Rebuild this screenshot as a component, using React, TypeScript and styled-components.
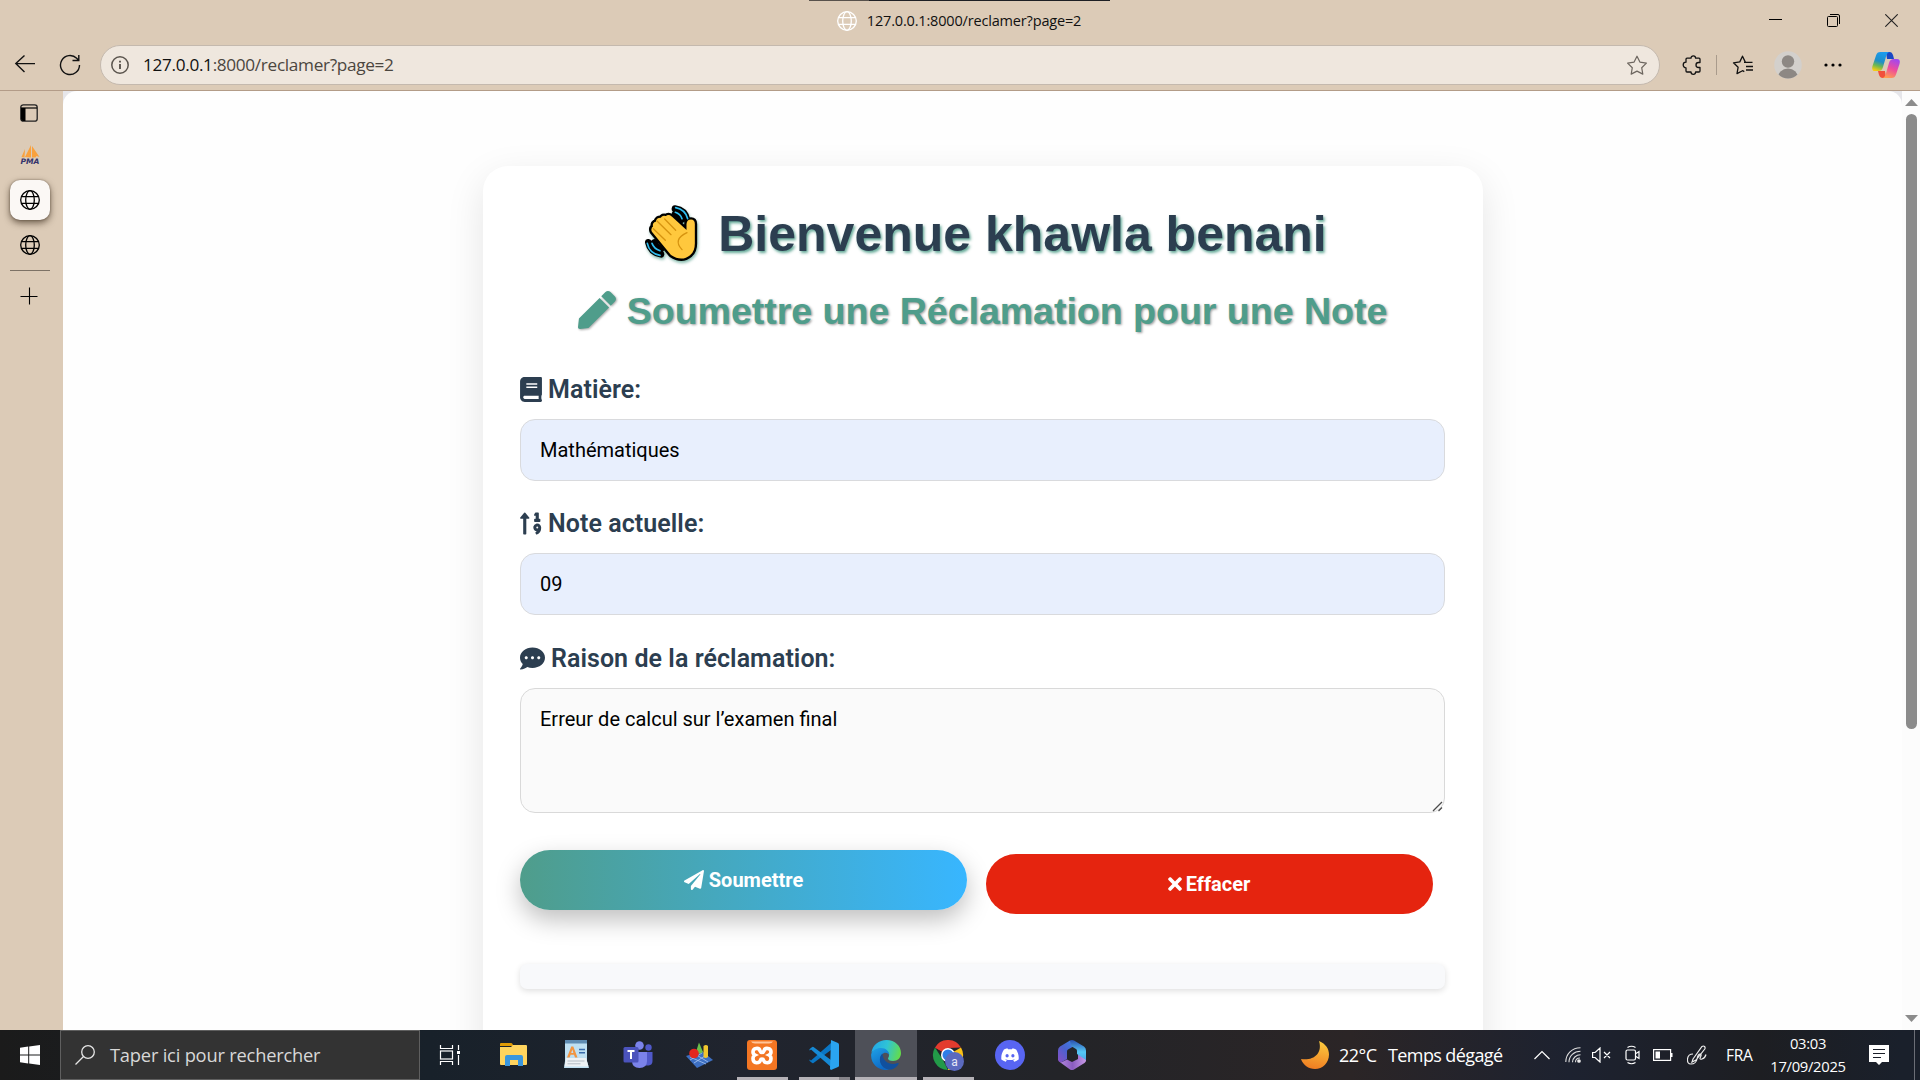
import React from 'react';
import styled, { createGlobalStyle } from 'styled-components';
import { FaPen, FaBook, FaSortNumericUp, FaCommentDots, FaPaperPlane, FaTimes, FaDiscord } from 'react-icons/fa';

const UI = `"Segoe UI", "Open Sans", "Noto Sans", sans-serif`;

const GlobalStyle = createGlobalStyle`
  * { box-sizing: border-box; }
  body { margin: 0; overflow: hidden; background: #dccbb7; }
  svg { display: block; flex: none; }
`;

const Desktop = styled.div`
  width: 1920px;
  height: 1080px;
  display: flex;
  flex-direction: column;
  overflow: hidden;
  background: #dccbb7;
  font-family: ${UI};
  color: #111;
`;

/* ---------- browser chrome ---------- */

const TopLine = styled.div`
  height: 1px;
  width: 301px;
  margin-left: 809px;
  background: linear-gradient(90deg, #58524c 60px, #1d1f24 60px);
`;

const TitleBar = styled.div`
  height: 39px;
  display: grid;
  grid-template-columns: 1fr auto 1fr;
  align-items: center;
`;

const TabTitle = styled.div`
  grid-column: 2;
  display: flex;
  align-items: center;
  gap: 10px;
  height: 39px;
  padding-right: 2px;
  font-size: 14.5px;
  letter-spacing: -0.17px;
  white-space: nowrap;
`;

const WindowButtons = styled.div`
  display: flex;
  justify-content: flex-end;
  gap: 45px;
  padding-right: 22px;
`;

const Toolbar = styled.div`
  height: 51px;
  display: flex;
  align-items: center;
  padding: 0 19px 1px 14px;
  border-bottom: 1px solid #b39c88;
`;

const NavButtons = styled.div`
  display: flex;
  gap: 23px;
  width: 86px;
`;

const AddressBar = styled.div`
  width: 1560px;
  height: 40px;
  display: flex;
  align-items: center;
  padding: 0 11px 0 10px;
  border: 1px solid #c4b9ae;
  border-radius: 20px;
  background: #efe7de;
`;

const Url = styled.div`
  flex: 1;
  padding-left: 14px;
  font-size: 17.2px;
  letter-spacing: -0.32px;
  color: #4b4640;
  b { font-weight: 400; color: #111; }
`;

const Tools = styled.div`
  flex: 1;
  display: flex;
  align-items: center;
  gap: 20px;
  padding-left: 22px;
`;

const ToolDivider = styled.div`
  width: 1px;
  height: 20px;
  margin: 0 -5px 0 -6px;
  background: #a99b8c;
`;

const MoreDots = styled.div`
  padding: 0 10px 0 2px;
`;

const Middle = styled.div`
  height: 939px;
  display: flex;
`;

const Rail = styled.div`
  width: 63px;
  display: flex;
  flex-direction: column;
  align-items: flex-start;
  padding: 13px 0 0 10px;
`;

const RailItem = styled.div<{ $h: number; $w?: number; $top?: number; $active?: boolean }>`
  width: ${p => p.$w ?? 40}px;
  height: ${p => p.$h}px;
  padding-top: ${p => p.$top ?? 0}px;
  display: grid;
  place-items: center;
  border-radius: 10px;
  background: ${p => (p.$active ? '#fbf8f5' : 'transparent')};
  box-shadow: ${p => (p.$active ? '0 3px 7px rgba(50,35,20,.65), 0 0 2px rgba(50,35,20,.5)' : 'none')};
`;

const RailLine = styled.div`
  width: 40px;
  height: 1px;
  margin: 0 0 16px;
  background: #7d7266;
`;

const PageFrame = styled.div`
  width: 1839px;
  background: #e6e6ea;
`;

const Page = styled.div`
  height: 939px;
  padding-top: 75px;
  overflow: hidden;
  border-radius: 14px 14px 0 0;
  background: #fefefe;
`;

const ScrollTrack = styled.div`
  width: 18px;
  display: flex;
  flex-direction: column;
  align-items: center;
  padding: 8px 0 8px 1px;
  background: #fcfcfc;
`;

const ScrollThumb = styled.div`
  width: 11px;
  height: 615px;
  margin: 8px 0 auto;
  border-radius: 6px;
  background: #8b8b8b;
`;

/* ---------- form ---------- */

const Card = styled.div`
  width: 1000px;
  height: 1100px;
  margin: 0 auto;
  padding: 37.5px;
  border-radius: 25px;
  background: #fff;
  box-shadow: 0 12px 38px rgba(0, 0, 0, 0.1);
  font-family: Roboto, sans-serif;
`;

const Welcome = styled.h1`
  display: flex;
  justify-content: center;
  align-items: center;
  margin: 0 0 25px;
  padding-left: 6px;
  height: 60px;
  font: bold 50px/60px "Liberation Sans", Arial, sans-serif;
  color: #2c3e50;
  white-space: pre;
  text-shadow: 1.5px 2px 3px rgba(82, 160, 140, 0.9);
  svg { margin-right: 16px; filter: drop-shadow(1px 2px 1.5px rgba(82, 160, 140, 0.7)); }
`;

const Subtitle = styled.h2`
  display: flex;
  justify-content: center;
  gap: 11px;
  margin: 0 0 41px;
  height: 45px;
  font: bold 37.5px/45px "Liberation Sans", Arial, sans-serif;
  color: #4f9d8b;
  text-shadow: 1.3px 1.3px 2.5px rgba(0, 0, 0, 0.4);
  svg { margin-top: 2px; filter: drop-shadow(1.3px 1.3px 1.2px rgba(0, 0, 0, 0.35)); }
`;

const Field = styled.div`
  display: flex;
  flex-direction: column;
  margin-bottom: 28.5px;
`;

const Label = styled.label`
  display: flex;
  gap: 6px;
  height: 44px;
  font-size: 25px;
  line-height: 30px;
  font-weight: 600;
  letter-spacing: 0.06px;
  color: #2c3e50;
  svg { margin-top: 2px; }
`;

const Input = styled.input`
  height: 62px;
  padding: 0 19px;
  border: 1px solid #d9dadd;
  border-radius: 15px;
  background: #e8effd;
  font: 20px Roboto, sans-serif;
  color: #000;
  outline: 0;
`;

const AreaWrap = styled.div`
  display: flex;
  position: relative;
`;

const TextArea = styled.textarea`
  flex: 1;
  height: 125px;
  padding: 18.75px 19px;
  border: 1px solid #d9d9d9;
  border-radius: 15px;
  background: #fafafa;
  font: 20px Roboto, sans-serif;
  color: #000;
  outline: 0;
  resize: none;
`;

const ResizeGrip = styled.svg`
  position: absolute;
  right: 2px;
  bottom: 1px;
`;

const Actions = styled.div`
  display: flex;
  gap: 19px;
  margin: 41px 0 50px;
`;

const Action = styled.button<{ $primary?: boolean }>`
  width: 447px;
  height: 60px;
  display: flex;
  align-items: center;
  justify-content: center;
  gap: ${p => (p.$primary ? 5 : 4)}px;
  padding: 0 ${p => (p.$primary ? 0 : 1)}px 0 0;
  border: 0;
  border-radius: 30px;
  color: #fff;
  font: bold 20px Roboto, sans-serif;
  background: ${p => (p.$primary ? 'linear-gradient(90deg, #4f9d8b, #38b6ff)' : '#e5240f')};
  box-shadow: ${p => (p.$primary ? '0 10px 25px rgba(0,0,0,.25)' : 'none')};
  transform: translateY(${p => (p.$primary ? -4 : 0)}px);
`;

const ResultBar = styled.div`
  height: 25px;
  border-radius: 7px;
  background: #f8f9fb;
  box-shadow: 0 2px 6px rgba(0, 0, 0, 0.13);
`;

/* ---------- taskbar ---------- */

const Taskbar = styled.div`
  height: 50px;
  display: flex;
  color: #fff;
  background: linear-gradient(90deg, #1b1b1b 0, #18212a 430px, #20242e 750px, #232428 1060px, #2b2526 1350px, #1d2230 1570px, #1d1e22 1760px, #1a202b 1900px);
`;

const StartButton = styled.div`
  width: 60px;
  display: grid;
  place-items: center;
`;

const Search = styled.div`
  width: 360px;
  display: flex;
  align-items: center;
  gap: 15px;
  padding: 0 0 1px 14px;
  border: 1px solid #5f5f5f;
  background: #333;
  color: #d8d8d8;
  font-size: 18.3px;
  letter-spacing: -0.2px;
`;

const Apps = styled.div`
  display: flex;
`;

const TaskView = styled.div`
  width: 63px;
  padding: 10px 0 0 15px;
`;

const AppSlot = styled.div<{ $open?: boolean; $active?: boolean; $stacked?: boolean }>`
  width: 62px;
  height: 50px;
  display: flex;
  flex-direction: column;
  align-items: center;
  justify-content: space-between;
  padding-top: 10px;
  background: ${p => (p.$active ? '#4e5058' : 'transparent')};
  &::after {
    content: '';
    width: ${p => (p.$active ? 62 : 51)}px;
    height: 3px;
    background: ${p =>
      p.$stacked
        ? 'linear-gradient(90deg, #b5b2b7 40px, #86848a 40px)'
        : p.$open || p.$active
          ? '#b5b2b7'
          : 'transparent'};
  }
`;

const Tray = styled.div`
  flex: 1;
  display: flex;
  align-items: center;
  justify-content: flex-end;
`;

const TrayText = styled.div<{ $w: number; $ls?: number; $size?: number }>`
  width: ${p => p.$w}px;
  font-size: ${p => p.$size ?? 18}px;
  letter-spacing: ${p => p.$ls ?? 0}px;
  white-space: pre;
`;

const TrayIcon = styled.div<{ $w: number }>`
  width: ${p => p.$w}px;
`;

const Clock = styled.div`
  width: 96px;
  margin-right: 13px;
  display: flex;
  flex-direction: column;
  align-items: center;
  font-size: 14.8px;
  line-height: 23px;
  letter-spacing: -0.32px;
`;

const PeekEdge = styled.div`
  width: 1px;
  height: 50px;
  margin: 0 5px 0 25px;
  background: #6b6e76;
`;

/* ---------- drawings ---------- */

const Globe = ({ color = '#000', w = 1.3 }: { color?: string; w?: number }) => (
  <svg width="20" height="20" viewBox="0 0 20 20" fill="none" stroke={color} strokeWidth={w}>
    <circle cx="10" cy="10" r="9.3" />
    <ellipse cx="10" cy="10" rx="4.3" ry="9.3" />
    <path d="M1.4 6.7h17.2M1.4 13.3h17.2" />
  </svg>
);

const palm =
  'M576 313q30 20 54 0q13-12 12-36v-54q0-10-8-10q-9 0-10 10v26l-50-46q-8-6-14 0q-12-4-14 5q-14-2-14 10q-12 2-8 14q-8 4-4 13z';

const WavingHand = () => (
  <svg width="58" height="60" viewBox="493 163 174 180" strokeLinecap="round" strokeLinejoin="round" fill="none">
    <path d="M586 177q30 4 36 34M586 193q14 4 18 18M506 278q6 30 38 36M524 278q4 14 20 20" stroke="#000" strokeWidth="20" />
    <path d={palm} fill="#000" stroke="#000" strokeWidth="21" />
    <path d="M588 174q29 6 36 33M587 188q15 5 20 19M503 281q6 30 38 36M517 281q6 16 24 22" stroke="#2fbdf0" strokeWidth="5" />
    <path d={palm} fill="#ffc83d" stroke="#ffc83d" strokeWidth="7" />
    <path d="M521 237l36 35M532 214l42 41M555 208l33 34M622 249q-44 20-15 51" stroke="#d6930f" strokeWidth="4" />
  </svg>
);

const Copilot = () => (
  <svg width="28" height="28" viewBox="0 0 28 28">
    <defs>
      <linearGradient id="cpA" x1="0.6" y1="0" x2="0.3" y2="1"><stop stopColor="#1b9cf0" /><stop offset=".5" stopColor="#1f8fc7" /><stop offset=".75" stopColor="#6fb84e" /><stop offset="1" stopColor="#f5cb12" /></linearGradient>
      <linearGradient id="cpB" x1="0.7" y1="0" x2="0.3" y2="1"><stop stopColor="#a247ee" /><stop offset=".5" stopColor="#ee4c9c" /><stop offset="1" stopColor="#ffa050" /></linearGradient>
    </defs>
    <path d="M14 1h4q2 0 3 3l1 4h-7z" fill="#1947c4" />
    <path d="M14 27h-4q-2 0-3-3l-1-4h7z" fill="#f1503c" />
    <path d="M8.500 1H18c-3 0-3.500 3-4.500 6.500L11 16c-1 3-2 4-5 4H3c-3 0-3.200-2.500-2.500-5L4 4.500C4.800 2 6 1 8.500 1z" fill="url(#cpA)" />
    <path d="M19.500 27H10c3 0 3.500-3 4.500-6.500L17 12c1-3 2-4 5-4h3c3 0 3.200 2.500 2.500 5L24 23.500c-.8 2.500-2 3.500-4.500 3.500z" fill="url(#cpB)" />
  </svg>
);

const Moon = () => (
  <svg width="28" height="28" viewBox="0 0 28 28">
    <defs><linearGradient id="moon" x1=".6" y1="0" x2=".4" y2="1"><stop stopColor="#fbc93d" /><stop offset="1" stopColor="#f07c22" /></linearGradient></defs>
    <path d="M18 0C25 3 28 8 28 13.500C28 22 21.500 28 14 28C7.500 28 2 24 0 18C12 20 22 13 18 0z" fill="url(#moon)" />
  </svg>
);

const appDrawings: { name: string; art: React.ReactNode; open?: boolean; active?: boolean; stacked?: boolean }[] = [
  {
    name: 'explorer',
    art: (
      <svg width="30" height="30" viewBox="0 0 30 30">
        <path d="M1 4q0-1 1-1h10q1 0 1.500 1l1 2H1z" fill="#e09b05" />
        <path d="M1 7h11l2-2h13q1 0 1 1v18q0 1-1 1H2q-1 0-1-1z" fill="#ffd45e" />
        <path d="M6 26V17q0-2 2-2h14q2 0 2 2v9h-5v-6h-8v6z" fill="#3a96dd" />
      </svg>
    ),
  },
  {
    name: 'wordpad',
    art: (
      <svg width="30" height="30" viewBox="0 0 30 30">
        <path d="M4 1h22v20l2 7H3l1-7z" fill="#bfe0f2" />
        <path d="M4 0h22v3.500H4z" fill="#5f8cb2" />
        <path d="M5 18h20l2.500 8.500H3.500z" fill="#eef2f5" />
        <path d="M6 17.500L10.300 6.500h2l4.200 11h-2.500l-1-2.700H9.600l-1 2.700zM10.200 13h2.200L11.300 9.500z" fill="#f29440" />
        <path d="M18 9.500h6M18 12.800h6" stroke="#3a6cab" strokeWidth="1.600" />
        <path d="M6.500 21h17M6.500 23.800h13" stroke="#b4bdc5" strokeWidth="1" />
      </svg>
    ),
  },
  {
    name: 'teams',
    art: (
      <svg width="30" height="30" viewBox="0 0 30 30">
        <circle cx="25.500" cy="7.500" r="3.200" fill="#5059c9" />
        <path d="M20 12h9.500v9q0 4-4 4.500H20z" fill="#5059c9" />
        <circle cx="16.500" cy="5.500" r="4.300" fill="#7b83eb" />
        <path d="M9 12h15v9q0 7-7.500 7T9 21z" fill="#7b83eb" />
        <rect x="0.500" y="7" width="15" height="15.500" rx="1.500" fill="#4b53bc" />
        <path d="M4.500 11h7M8 11v8" stroke="#fff" strokeWidth="2" />
      </svg>
    ),
  },
  {
    name: 'graph',
    art: (
      <svg width="30" height="30" viewBox="0 0 30 30">
        <path d="M1 16l16-5 11 9-16 8z" fill="#3d6fc2" />
        <path d="M5 17l16 7M10 14l13 8M9 23l14-9M5 20l12-7" stroke="#a8c5f0" strokeWidth=".8" />
        <path d="M14 2.500l4 9.500q-4 3-7 0z" fill="#6cc04a" />
        <circle cx="9" cy="13.500" r="4.800" fill="#e3261f" />
        <path d="M18.500 6q2.500-2 4.500 0v11q-2.500 2-4.500 0z" fill="#f2c62e" />
      </svg>
    ),
  },
  {
    name: 'xampp',
    open: true,
    art: (
      <svg width="30" height="30" viewBox="0 0 30 30">
        <rect width="30" height="30" rx="3" fill="#f37623" />
        <path d="M4 1.500h22q-1 2-4 2H8q-3 0-4-2z" fill="#ffc59a" />
        <path d="M9 8.500q3.500-.5 4 2.500q.5 1.500 2 1.500t2-1.500q.5-3 4-2.500q3 .5 3 3.500q0 2-2 3q2 1 2 3.500q0 4-3.500 4.300q-3.500 0-4-2.800q-.2-1-1.500-1t-1.500 1q-.5 2.800-4 2.800q-3.500-.3-3.500-4.300q0-2.500 2-3.500q-2-1-2-3q0-3 3-3.500z" fill="none" stroke="#fff" strokeWidth="3.600" />
      </svg>
    ),
  },
  {
    name: 'vscode',
    open: true,
    stacked: true,
    art: (
      <svg width="30" height="30" viewBox="0 0 30 30">
        <path d="M2 20.500L22 3v7L4.500 23q-1 .5-1.600-.2L.7 21q-.6-.6 0-1.400z" fill="#0a76c4" />
        <path d="M2 9.500L22 27v-7L4.500 7q-1-.5-1.600.2L.7 9q-.6.6 0 1.400z" fill="#1689d4" />
        <path d="M22 0l7 3q1 .5 1 1.500v21q0 1-1 1.500l-7 3-1-1z" fill="#2aa4f0" />
      </svg>
    ),
  },
  {
    name: 'edge',
    active: true,
    art: (
      <svg width="30" height="30" viewBox="0 0 30 30">
        <defs>
          <linearGradient id="edA" x1="0" y1=".3" x2="1" y2=".5"><stop stopColor="#22a6e8" /><stop offset=".5" stopColor="#2fc3d6" /><stop offset="1" stopColor="#63dc4c" /></linearGradient>
          <linearGradient id="edB" x1="0" y1="0" x2=".5" y2="1"><stop stopColor="#1fa2e6" /><stop offset="1" stopColor="#0d68c4" /></linearGradient>
        </defs>
        <path d="M.3 13C1.500 5 8 0 15.500 0C24 0 30 6 30 13c0 5-3.500 8-8 8c-3.500 0-5-1.500-5-2.500c0-.8 1-1.200 1-3.500c0-3-3-5.500-7-5.500C6 9.500 1.500 11 .3 13z" fill="url(#edA)" />
        <path d="M.2 14C1.500 10.500 5 8 10 8c5 0 8.300 3.500 8.300 7c0 0-2.300-3-5.300-2c-3 1-4 4-3.500 7.500C10.300 26 15 29 19 29.500C8 32-.8 24 .2 14z" fill="url(#edB)" />
        <path d="M11.500 13.500c-5 4-3 14.500 6 16c4 .5 8-2 10-5.500c.4-.8-.2-1.300-1-.9C20 26 11.500 22 11.500 13.500z" fill="#11509e" />
      </svg>
    ),
  },
  {
    name: 'chrome',
    open: true,
    art: (
      <svg width="32" height="32" viewBox="-1 0 32 32">
        <path d="M15 15L2 7.500A15 15 0 0 1 28 7.500L15 8z" fill="#e33b2e" />
        <path d="M15 15L28 7.500A15 15 0 0 1 15 30z" fill="#fbc116" />
        <path d="M2 7.500L10 20l5 10A15 15 0 0 1 2 7.500z" fill="#229a48" />
        <path d="M2 7.500h13V15z" fill="#e33b2e" />
        <circle cx="15" cy="15" r="7" fill="#fff" />
        <circle cx="15" cy="15" r="5.500" fill="#2f7de8" />
        <circle cx="21.500" cy="21.500" r="9.500" fill="#5b6abf" />
        <text x="21.500" y="25.500" textAnchor="middle" fontSize="12" fontFamily="Roboto, sans-serif" fill="#e6e8f7">a</text>
      </svg>
    ),
  },
  {
    name: 'discord',
    art: (
      <svg width="30" height="30" viewBox="0 0 30 30">
        <circle cx="15" cy="15" r="15" fill="#5865f2" />
        <FaDiscord x={5.5} y={5.5} size={19} color="#fff" />
      </svg>
    ),
  },
  {
    name: 'm365',
    art: (
      <svg width="30" height="30" viewBox="0 0 30 30">
        <defs>
          <linearGradient id="mA" x1="0" y1="1" x2="1" y2="0"><stop stopColor="#8a4fc4" /><stop offset=".5" stopColor="#4a62cf" /><stop offset="1" stopColor="#3a86e8" /></linearGradient>
          <linearGradient id="mB" x1="0" y1="0" x2="0" y2="1"><stop stopColor="#2a4fb0" /><stop offset=".6" stopColor="#55c8f5" /><stop offset="1" stopColor="#4aa8e8" /></linearGradient>
          <linearGradient id="mC" x1="0" y1="0" x2="1" y2="0"><stop stopColor="#b58ae0" /><stop offset=".5" stopColor="#8a5cc0" /><stop offset="1" stopColor="#c79ae6" /></linearGradient>
        </defs>
        <path d="M2 21.500q2 1.500 4 0l4-2 5 2.500 6-3V13l7.500 5.500q1.500 2.500-1 4.500L17 29.500q-2 1-4 0z" fill="url(#mC)" />
        <path d="M13 .6L3 6.500Q1 8 1 10.500V20q1 3 4 2l5-3v-7.500q0-1.500 1-2l8-4.500z" fill="url(#mA)" />
        <path d="M13 .6q2-1 4 0l10 6q2 1.500 2 4V20l-9-6v-3q0-1.500-1-2l-5-3z" fill="url(#mB)" />
      </svg>
    ),
  },
];

const App = () => (
  <Desktop>
    <GlobalStyle />
    <TopLine />
    <TitleBar>
      <TabTitle><Globe color="#fff" /><span>127.0.0.1:8000/reclamer?page=2</span></TabTitle>
      <WindowButtons>
        <svg width="13" height="13" viewBox="0 0 13 13"><path d="M0 5.500h13" stroke="#000" /></svg>
        <svg width="13" height="13" viewBox="0 0 13 13" fill="none" stroke="#000"><rect x=".5" y="2.500" width="10" height="10" rx="1" /><path d="M3 .5h8q1.500 0 1.500 1.500v8" /></svg>
        <svg width="13" height="13" viewBox="0 0 13 13"><path d="M.3.3l12.400 12.400M12.700.3L.3 12.700" stroke="#222" strokeWidth="1.100" /></svg>
      </WindowButtons>
    </TitleBar>
    <Toolbar>
      <NavButtons>
        <svg width="22" height="20" viewBox="0 0 22 20" fill="none" stroke="#111" strokeWidth="1.400"><path d="M10.500 1.500L1.800 9.600l8.700 8.400M2 9.600h19" /></svg>
        <svg width="22" height="22" viewBox="0 0 22 22" fill="none" stroke="#111" strokeWidth="1.400"><path d="M20.500 11a9.500 9.500 0 1 1-2.800-6.700l1.800 1.900M19.800 1v5.500H13.500" /></svg>
      </NavButtons>
      <AddressBar>
        <svg width="18" height="18" viewBox="0 0 18 18" fill="none" stroke="#5b554e" strokeWidth="1.500"><circle cx="9" cy="9" r="8.200" /><path d="M9 8v5M9 4.800v1.700" strokeWidth="1.900" /></svg>
        <Url><b>127.0.0.1</b>:8000/reclamer?page=2</Url>
        <svg width="22" height="20" viewBox="0 0 22 20" fill="none" stroke="#6d665f" strokeWidth="1.200" strokeLinejoin="round"><path d="M11 1.200l2.900 5.900 6.500 1-4.700 4.600 1.100 6.400L11 16.100l-5.800 3 1.100-6.400L1.600 8.100l6.500-1z" /></svg>
      </AddressBar>
      <Tools>
        <svg width="20" height="20" viewBox="0 0 20 20" fill="none" stroke="#111" strokeWidth="1.300" strokeLinejoin="round"><path d="M5 3.200h4a2.300 2.300 0 0 1 4.600 0H17q1 0 1 1V7.500h-1.500a2.500 2.500 0 0 0 0 5H18V16q0 1-1 1h-3.400a2.300 2.300 0 0 1-4.600 0H5q-1 0-1-1v-3.200a2.600 2.600 0 0 1 0-5.600V4.200q0-1 1-1z" /></svg>
        <ToolDivider />
        <svg width="22" height="20" viewBox="0 0 22 20" fill="none" stroke="#111" strokeWidth="1.300" strokeLinejoin="round"><path d="M12 7.300h8.500M14 11.500h7M14 15h7M14.500 7.300l-1.200-.2L10.500 1.200 7.800 6.900l-6.300.9 4.600 4.500L5 18.600l5.500-2.900 1.800.9" /></svg>
        <svg width="28" height="28" viewBox="0 0 28 28"><defs><clipPath id="av"><circle cx="14" cy="14" r="13.500" /></clipPath></defs><circle cx="14" cy="14" r="13.800" fill="#d3d0cc" /><g clipPath="url(#av)" fill="#8d8884"><circle cx="14" cy="10.500" r="6.200" /><circle cx="14" cy="28" r="10.500" /></g></svg>
        <MoreDots><svg width="18" height="4" viewBox="0 0 18 4"><circle cx="2" cy="2" r="1.600" /><circle cx="9" cy="2" r="1.600" /><circle cx="16" cy="2" r="1.600" /></svg></MoreDots>
        <Copilot />
      </Tools>
    </Toolbar>

    <Middle>
      <Rail>
        <RailItem $h={18} $w={38}>
          <svg width="18" height="18" viewBox="0 0 18 18"><rect x=".8" y=".8" width="16.400" height="16.400" rx="2.500" fill="none" stroke="#222" strokeWidth="1.300" /><path d="M1 4h16" stroke="#000" strokeWidth="1.200" /><path d="M1 4h4.500v13H3q-2 0-2-2z" /></svg>
        </RailItem>
        <RailItem $h={58} $top={8}>
          <svg width="22" height="20" viewBox="0 0 22 20">
            <path d="M6 4L2.500 12l3 .5zM12 0v12.500L6 12zM13 1l7.500 11-3-1-1 1.500H13z" fill="#f9a13d" />
            <text x="11" y="18.500" textAnchor="middle" textLength="19" lengthAdjust="spacingAndGlyphs" fontSize="7.500" fontWeight="bold" fontStyle="italic" fontFamily="DejaVu Sans, sans-serif" fill="#34346c">PMA</text>
          </svg>
        </RailItem>
        <RailItem $h={40} $active><Globe /></RailItem>
        <RailItem $h={50}><Globe /></RailItem>
        <RailLine />
        <RailItem $h={18} $w={38}><svg width="18" height="18" viewBox="0 0 18 18"><path d="M9.500 .5v17M.5 9.500h17" stroke="#000" strokeWidth="1.100" /></svg></RailItem>
      </Rail>
      <PageFrame>
        <Page>
          <Card>
            <Welcome><WavingHand />Bienvenue khawla benani</Welcome>
            <Subtitle><FaPen size={38} />Soumettre une Réclamation pour une Note</Subtitle>
            <Field>
              <Label><FaBook size={25} style={{ width: 22 }} />Matière:</Label>
              <Input defaultValue="Mathématiques" />
            </Field>
            <Field>
              <Label><FaSortNumericUp size={25} style={{ width: 22 }} />Note actuelle:</Label>
              <Input defaultValue="09" />
            </Field>
            <Field>
              <Label><FaCommentDots size={25} />Raison de la réclamation:</Label>
              <AreaWrap>
                <TextArea defaultValue="Erreur de calcul sur l’examen final" />
                <ResizeGrip width="11" height="11" viewBox="0 0 11 11" stroke="#4c4c4c" strokeWidth="1.300">
                  <path d="M1 10L10 1M6.500 10L10 6.500" />
                </ResizeGrip>
              </AreaWrap>
            </Field>
            <Actions>
              <Action $primary><FaPaperPlane size={20} />Soumettre</Action>
              <Action><FaTimes size={20} style={{ width: 14 }} />Effacer</Action>
            </Actions>
            <ResultBar />
          </Card>
        </Page>
      </PageFrame>
      <ScrollTrack>
        <svg width="13" height="7" viewBox="0 0 13 7"><path d="M6.500 0L13 7H0z" fill="#8b8b8b" /></svg>
        <ScrollThumb />
        <svg width="13" height="7" viewBox="0 0 13 7"><path d="M6.500 7L13 0H0z" fill="#8b8b8b" /></svg>
      </ScrollTrack>
    </Middle>

    <Taskbar>
      <StartButton>
        <svg width="20" height="20" viewBox="0 0 20 20" fill="#fff"><path d="M0 2.800l8.200-1.200v7.900H0zM9.200 1.400L20 0v9.500H9.200zM0 10.500h8.200v7.900L0 17.200zM9.200 10.500H20V20L9.200 18.500z" /></svg>
      </StartButton>
      <Search>
        <svg width="20" height="20" viewBox="0 0 20 20" fill="none" stroke="#e6e6e6" strokeWidth="1.300"><circle cx="13" cy="7" r="6.300" /><path d="M8.500 11.500L.5 19.500" /></svg>
        <span>Taper ici pour rechercher</span>
      </Search>
      <Apps>
        <TaskView>
          <svg width="30" height="30" viewBox="-5 -5 30 30" fill="none" stroke="#fff" strokeWidth="1.200"><path d="M.5 0v3.500h12V0M.5 20v-3.500h12V20" /><rect x=".5" y="6" width="12" height="8" /><path d="M18.500 0v5M18.500 10v10" /><path d="M17 6h3v3h-3z" fill="#fff" stroke="none" /></svg>
        </TaskView>
        {appDrawings.map(a => (
          <AppSlot key={a.name} $open={a.open} $active={a.active} $stacked={a.stacked}>{a.art}</AppSlot>
        ))}
      </Apps>
      <Tray>
        <TrayIcon $w={38}><Moon /></TrayIcon>
        <TrayText $w={49} $ls={-0.5}>22°C</TrayText>
        <TrayText $w={146} $ls={-0.6}>Temps dégagé</TrayText>
        <TrayIcon $w={31}><svg width="16" height="10" viewBox="0 0 16 10" fill="none" stroke="#fff" strokeWidth="1.200"><path d="M.5 9L8 1.500 15.500 9" /></svg></TrayIcon>
        <TrayIcon $w={27}><svg width="16" height="16" viewBox="0 0 16 16" fill="none" stroke="#ddd" strokeWidth="1.100"><path d="M.8 15C.8 7 7 .8 15.500.8M4 15.200C4 9 9 4.300 15.500 4.300M7.500 15.200c0-4 3.500-7.400 8-7.400M10.500 15.200c0-2.500 2-4.200 4.500-4.200" /><circle cx="14" cy="14" r="1.300" fill="#fff" /></svg></TrayIcon>
        <TrayIcon $w={33}><svg width="19" height="16" viewBox="0 0 19 16" fill="none" stroke="#fff" strokeWidth="1.200"><path d="M.6 5.500h2.500L8 1v14l-4.900-4.500H.6zM12 5l6 6M18 5l-6 6" /></svg></TrayIcon>
        <TrayIcon $w={28}><svg width="16" height="20" viewBox="0 0 16 20" fill="none" stroke="#fff" strokeWidth="1.200"><rect x="1" y="5" width="9.500" height="10" rx="1.500" /><path d="M11 8.500l3-2v7l-3-2M2.500 2.500q4-2.500 8 0M2.500 17.500q4 2.500 8 0" /></svg></TrayIcon>
        <TrayIcon $w={34}><svg width="20" height="12" viewBox="0 0 20 12"><rect x=".6" y=".6" width="17" height="10.800" fill="none" stroke="#fff" strokeWidth="1.200" /><path d="M2.500 2.500h4.500v7H2.500zM18 4h1.500v4H18z" fill="#fff" /></svg></TrayIcon>
        <TrayIcon $w={39}><svg width="20" height="20" viewBox="0 0 20 20" fill="none" stroke="#eee" strokeWidth="1.200"><path d="M6 14L15 1.500q1.500-1 2.500 0t.3 2.500L9 15l-4 2zM6 9q-5 0-5.500 5T4 19q5 0 6-5t3-5q2 0 .5 3t1.500 2q3-1 4-4.500" /></svg></TrayIcon>
        <TrayText $w={34} $size={15.5} $ls={-0.3}>FRA</TrayText>
        <Clock><span>03:03</span><span>17/09/2025</span></Clock>
        <TrayIcon $w={20}><svg width="20" height="20" viewBox="0 0 20 20"><path d="M0 0h20v17h-7l-3 3-3-3H0z" fill="#fff" /><path d="M4 4.500h12M4 8.500h12M4 12.500h8" stroke="#1b1f29" strokeWidth="1.200" /></svg></TrayIcon>
        <PeekEdge />
      </Tray>
    </Taskbar>
  </Desktop>
);

export default App;
